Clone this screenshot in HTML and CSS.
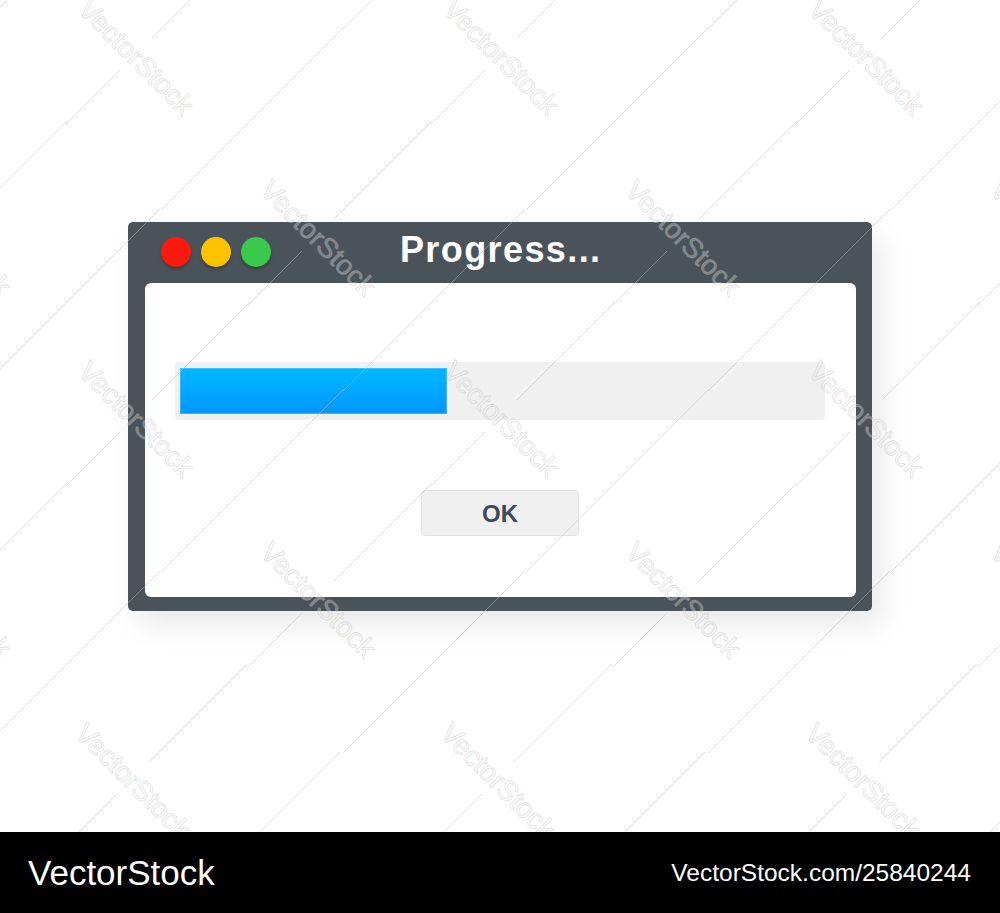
FILE: index.html
```html
<!DOCTYPE html>
<html>
  <head>
    <title>Progress</title>
    <meta charset="UTF-8" />
    <link rel="stylesheet" href="styles.css">
  </head>

  <body>
    <div class="stage">
      <div class="window">
        <div class="titleBar">
          <div class="lights">
            <span class="light red"></span>
            <span class="light yellow"></span>
            <span class="light green"></span>
          </div>
          <h1 class="title">Progress...</h1>
          <div></div>
        </div>

        <div class="panel">
          <div class="track">
            <div class="fill" style="width: 41.7%"></div>
          </div>
          <button class="okButton">OK</button>
        </div>
      </div>

      <!-- stock watermark, repeated over the whole canvas -->
      <svg class="marks" viewBox="0 0 1000 832" width="1000" height="832">
        <defs>
          <g id="mark">
            <line x1="-70" y1="67" x2="-16" y2="13" />
            <line x1="16" y1="-19" x2="114" y2="-117" />
            <line x1="25" y1="153" x2="207" y2="-29" />
            <text x="0" y="0" transform="rotate(45)">VectorStock</text>
          </g>
        </defs>
        <use href="#mark" x="-47" y="-124" />
        <use href="#mark" x="318" y="-124" />
        <use href="#mark" x="683" y="-124" />
        <use href="#mark" x="1048" y="-124" />

        <use href="#mark" x="136" y="57" />
        <use href="#mark" x="501" y="57" />
        <use href="#mark" x="866" y="57" />

        <use href="#mark" x="-47" y="238" />
        <use href="#mark" x="318" y="238" />
        <use href="#mark" x="683" y="238" />
        <use href="#mark" x="1048" y="238" />

        <use href="#mark" x="136" y="419" />
        <use href="#mark" x="501" y="419" />
        <use href="#mark" x="866" y="419" />

        <use href="#mark" x="-47" y="600" />
        <use href="#mark" x="318" y="600" />
        <use href="#mark" x="683" y="600" />
        <use href="#mark" x="1048" y="600" />

        <use href="#mark" x="133" y="781" />
        <use href="#mark" x="498" y="781" />
        <use href="#mark" x="863" y="781" />
      </svg>
    </div>

    <div class="footer">
      <span class="brand">VectorStock</span>
      <span class="ref">VectorStock.com/25840244</span>
    </div>
  </body>
</html>
```

FILE: styles.css
```css
html * {
  margin: 0;
  padding: 0;
}

body {
  font-family: "Liberation Sans", Arial, sans-serif;
  background: white;
}

.stage {
  position: relative;
  height: 832px;
  display: flex;
  align-items: center;
  justify-content: center;
  overflow: hidden;
}

.window {
  width: 744px;
  background-color: #4a535a;
  border-radius: 5px;
  box-shadow: 10px 14px 30px rgba(0, 0, 0, 0.09);
}

.titleBar {
  height: 61px;
  display: grid;
  grid-template-columns: 1fr auto 1fr;
  align-items: center;
}

.lights {
  display: flex;
  gap: 10px;
  padding-left: 33px;
}

.light {
  width: 30px;
  height: 30px;
  border-radius: 50%;
  box-shadow: 0 2px 3px rgba(0, 0, 0, 0.25);
}

.red {
  background-color: #fd1a0d;
}

.yellow {
  background-color: #fec300;
}

.green {
  background-color: #39c94b;
}

.title {
  color: white;
  font-size: 36px;
  font-weight: bold;
  line-height: 1;
  letter-spacing: 1.4px;
  padding-left: 1.4px;
  margin-bottom: 4px;
}

.panel {
  margin: 0 16px 14px 17px;
  padding: 79px 31px 61px 30px;
  background: white;
  border-radius: 6px;
  display: flex;
  flex-direction: column;
  align-items: center;
}

.track {
  align-self: stretch;
  height: 58px;
  box-sizing: border-box;
  padding: 6px 5px 6px 5px;
  background-color: #f0f0f0;
  border-radius: 3px;
}

.fill {
  height: 100%;
  background: linear-gradient(#00b9ff, #0096ff);
  box-shadow: inset 0 0 0 1px rgba(120, 200, 255, 0.5);
}

.okButton {
  margin-top: 70px;
  width: 158px;
  height: 46px;
  padding-top: 3px;
  background-color: #f0f0f0;
  border: 1px solid #e3e3e3;
  border-radius: 4px;
  color: #3c4a5d;
  font-family: "Liberation Sans", Arial, sans-serif;
  font-size: 24px;
  font-weight: bold;
}

.marks {
  position: absolute;
  top: 0;
  left: 0;
  pointer-events: none;
}

.marks line {
  stroke: rgba(190, 190, 190, 0.5);
  stroke-width: 1;
}

.marks text {
  font-family: "Liberation Sans", Arial, sans-serif;
  font-size: 28px;
  text-anchor: middle;
  dominant-baseline: central;
  fill: rgba(255, 255, 255, 0.3);
  stroke: rgba(180, 180, 180, 0.35);
  stroke-width: 1;
}

.footer {
  height: 81px;
  background: black;
  color: white;
  display: flex;
  align-items: center;
  justify-content: space-between;
  padding: 0 29px 0 28px;
}

.brand {
  font-size: 35px;
}

.ref {
  font-size: 24.5px;
}
```
